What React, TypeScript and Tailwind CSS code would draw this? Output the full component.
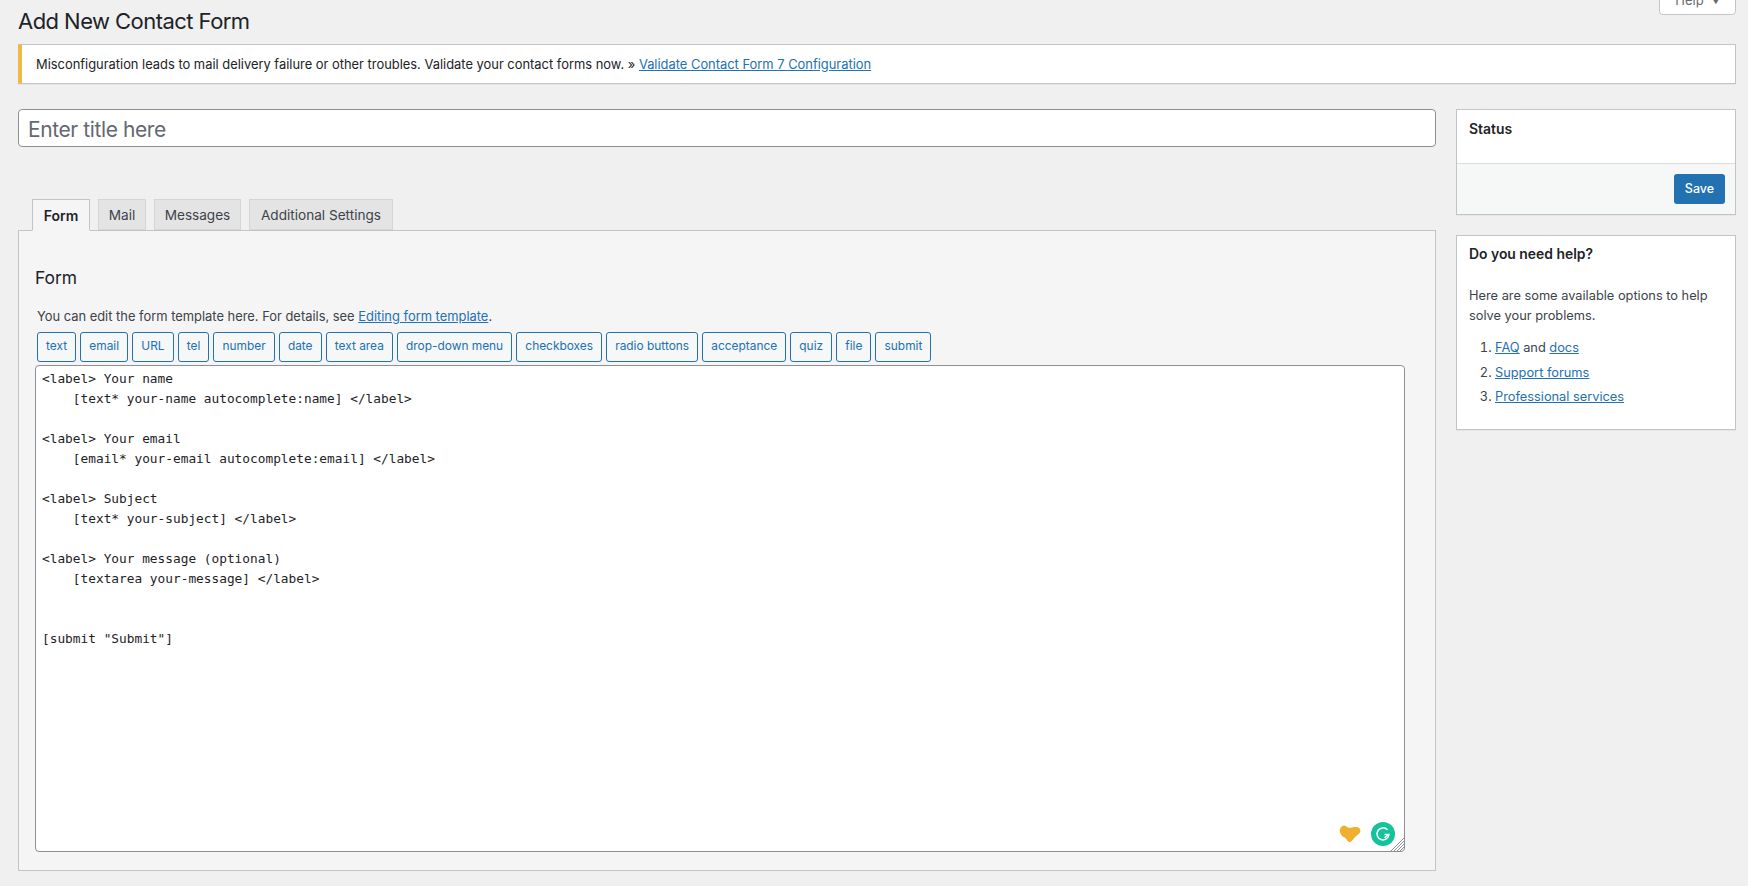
const tags = ["text", "email", "URL", "tel", "number", "date", "text area", "drop-down menu", "checkboxes", "radio buttons", "acceptance", "quiz", "file", "submit"];

const template = `<label> Your name
    [text* your-name autocomplete:name] </label>

<label> Your email
    [email* your-email autocomplete:email] </label>

<label> Subject
    [text* your-subject] </label>

<label> Your message (optional)
    [textarea your-message] </label>


[submit "Submit"]`;

function WpLink({ children }: { children: React.ReactNode }) {
  return (
    <a href="#" className="text-[#2271b1] underline">
      {children}
    </a>
  );
}

function Tab({ label, width, active = false }: { label: string; width: string; active?: boolean }) {
  if (active) {
    return (
      <div className={`-mb-px flex h-[32px] items-center justify-center border border-[#c3c4c7] border-b-[#f5f5f5] bg-[#f5f5f5] pt-px text-[14px] font-semibold text-[#1d2327] ${width}`}>
        {label}
      </div>
    );
  }
  return <div className={`flex h-[31px] items-center justify-center border border-[#d5d5d5] bg-[#e4e4e4] pt-px text-[#3c434a] ${width}`}>{label}</div>;
}

export default function App() {
  return (
    <div className="h-[886px] overflow-hidden bg-[#f0f0f1] pl-[18px] pr-[12px] font-['Inter',sans-serif] text-[12.9px] text-[#3c434a]">
      <div className="flex h-[44px] items-start justify-between">
        <h1 className="mt-[6px] text-[22px] leading-[30px] tracking-[-0.55px] text-[#1d2327]">Add New Contact Form</h1>
        <div className="-mt-[13px] flex h-[28px] w-[77px] items-center justify-center gap-[8px] rounded-b-[4px] border border-[#c3c4c7] bg-white text-[13px] text-[#646970]">
          Help <span className="text-[8px]">▼</span>
        </div>
      </div>

      <div className="flex h-[40px] items-center border border-[#c3c4c7] border-l-[4px] border-l-[#f0b849] bg-white pl-[14px] pt-px text-[#1d2327] shadow-[0_1px_1px_rgba(0,0,0,0.04)]">
        <span>
          Misconfiguration leads to mail delivery failure or other troubles. Validate your contact forms now. » <WpLink>Validate Contact Form 7 Configuration</WpLink>
        </span>
      </div>

      <div className="mt-[25px] flex gap-[20px]">
        <div className="w-[1418px]">
          <input
            placeholder="Enter title here"
            className="h-[38px] w-full rounded-[4px] border border-[#8c8f94] bg-white px-[9px] pt-[2px] text-[21px] tracking-[-0.4px] text-[#1d2327] placeholder:text-[#646970]"
          />

          <div className="mt-[52px] flex items-end gap-[8px] pl-[14px] text-[13.6px]">
            <Tab label="Form" width="w-[58px]" active />
            <Tab label="Mail" width="w-[48px]" />
            <Tab label="Messages" width="w-[87px]" />
            <Tab label="Additional Settings" width="w-[144px]" />
          </div>

          <div className="h-[641px] border border-[#c3c4c7] bg-[#f5f5f5] pl-[16px] pr-[30px]">
            <h2 className="mt-[37px] text-[17.4px] leading-[20px] text-[#1d2327]">Form</h2>
            <p className="ml-[2px] mt-[19px] leading-[20px]">
              You can edit the form template here. For details, see <WpLink>Editing form template</WpLink>.
            </p>
            <div className="ml-[2px] mt-[5px] flex gap-[4px]">
              {tags.map((tag) => (
                <button key={tag} className="h-[30px] rounded-[3px] border border-[#2271b1] bg-[#f6f7f7] px-[8.100px] pb-[2px] text-[11.900px] text-[#2271b1]">
                  {tag}
                </button>
              ))}
            </div>
            <div className="relative mt-[3px]">
              <textarea
                defaultValue={template}
                className="block h-[487px] w-full resize-none rounded-[4px] border border-[#8c8f94] bg-white px-[6px] py-[3px] font-['DejaVu_Sans_Mono',monospace] text-[12.8px] leading-[20px] text-[#1d2327]"
              />
              <svg viewBox="0 0 24 20" className="absolute bottom-[9px] right-[43px] h-[18px] w-[24px]">
                <path d="M0.500 6 C1 3 3 0.500 5 0.500 C7.500 0.500 9 3 11.500 3 C14 3 17 1.500 20.500 2.500 C22.500 3 24 5 23.500 7 C23 10 20 11 18.500 12.500 C16 15 14 19 11.500 19 C9 19 8 15 6 14 C3 12.500 0.500 9 0.500 6 Z" fill="#edb02f" />
              </svg>
              <div className="absolute bottom-[6px] right-[10px] flex h-[24px] w-[24px] items-center justify-center rounded-full bg-[#15c39a]">
                <svg viewBox="0 0 24 24" className="h-[18px] w-[18px]" fill="none" stroke="white" strokeWidth="2">
                  <path d="M18 6.500 A8 8 0 1 0 20 12.500 L14 12.500" />
                  <path d="M14 17 L19 12.800" />
                </svg>
              </div>
              <svg viewBox="0 0 13 13" className="pointer-events-none absolute bottom-[1px] right-[1px] h-[13px] w-[13px]" stroke="#8c8f94" strokeWidth="1">
                <path d="M0 13 L13 0 M3 13 L13 3 M6 13 L13 6 M9 13 L13 9" />
              </svg>
            </div>
          </div>
        </div>

        <div className="w-[280px]">
          <div className="border border-[#c3c4c7] bg-white shadow-[0_1px_1px_rgba(0,0,0,0.04)]">
            <h3 className="h-[53px] px-[12px] pt-[9px] text-[13.9px] font-semibold leading-[20px] text-[#1d2327]">Status</h3>
            <div className="flex h-[51px] items-center justify-end border-t border-[#dcdcde] bg-[#f6f7f7] pr-[10px]">
              <button className="h-[30px] w-[51px] rounded-[3px] bg-[#2271b1] pt-px text-[12.5px] font-medium text-white">Save</button>
            </div>
          </div>

          <div className="mt-[20px] h-[195px] border border-[#c3c4c7] bg-white px-[12px] pt-[8px] shadow-[0_1px_1px_rgba(0,0,0,0.04)]">
            <h3 className="text-[13.9px] font-semibold leading-[20px] text-[#1d2327]">Do you need help?</h3>
            <p className="mt-[22px] text-[12.8px] leading-[20px]">Here are some available options to help solve your problems.</p>
            <ol className="ml-[26px] mt-[12px] list-decimal text-[12.8px] leading-[20px]">
              <li className="mb-[4.500px]">
                <WpLink>FAQ</WpLink> and <WpLink>docs</WpLink>
              </li>
              <li className="mb-[4.500px]">
                <WpLink>Support forums</WpLink>
              </li>
              <li>
                <WpLink>Professional services</WpLink>
              </li>
            </ol>
          </div>
        </div>
      </div>
    </div>
  );
}
